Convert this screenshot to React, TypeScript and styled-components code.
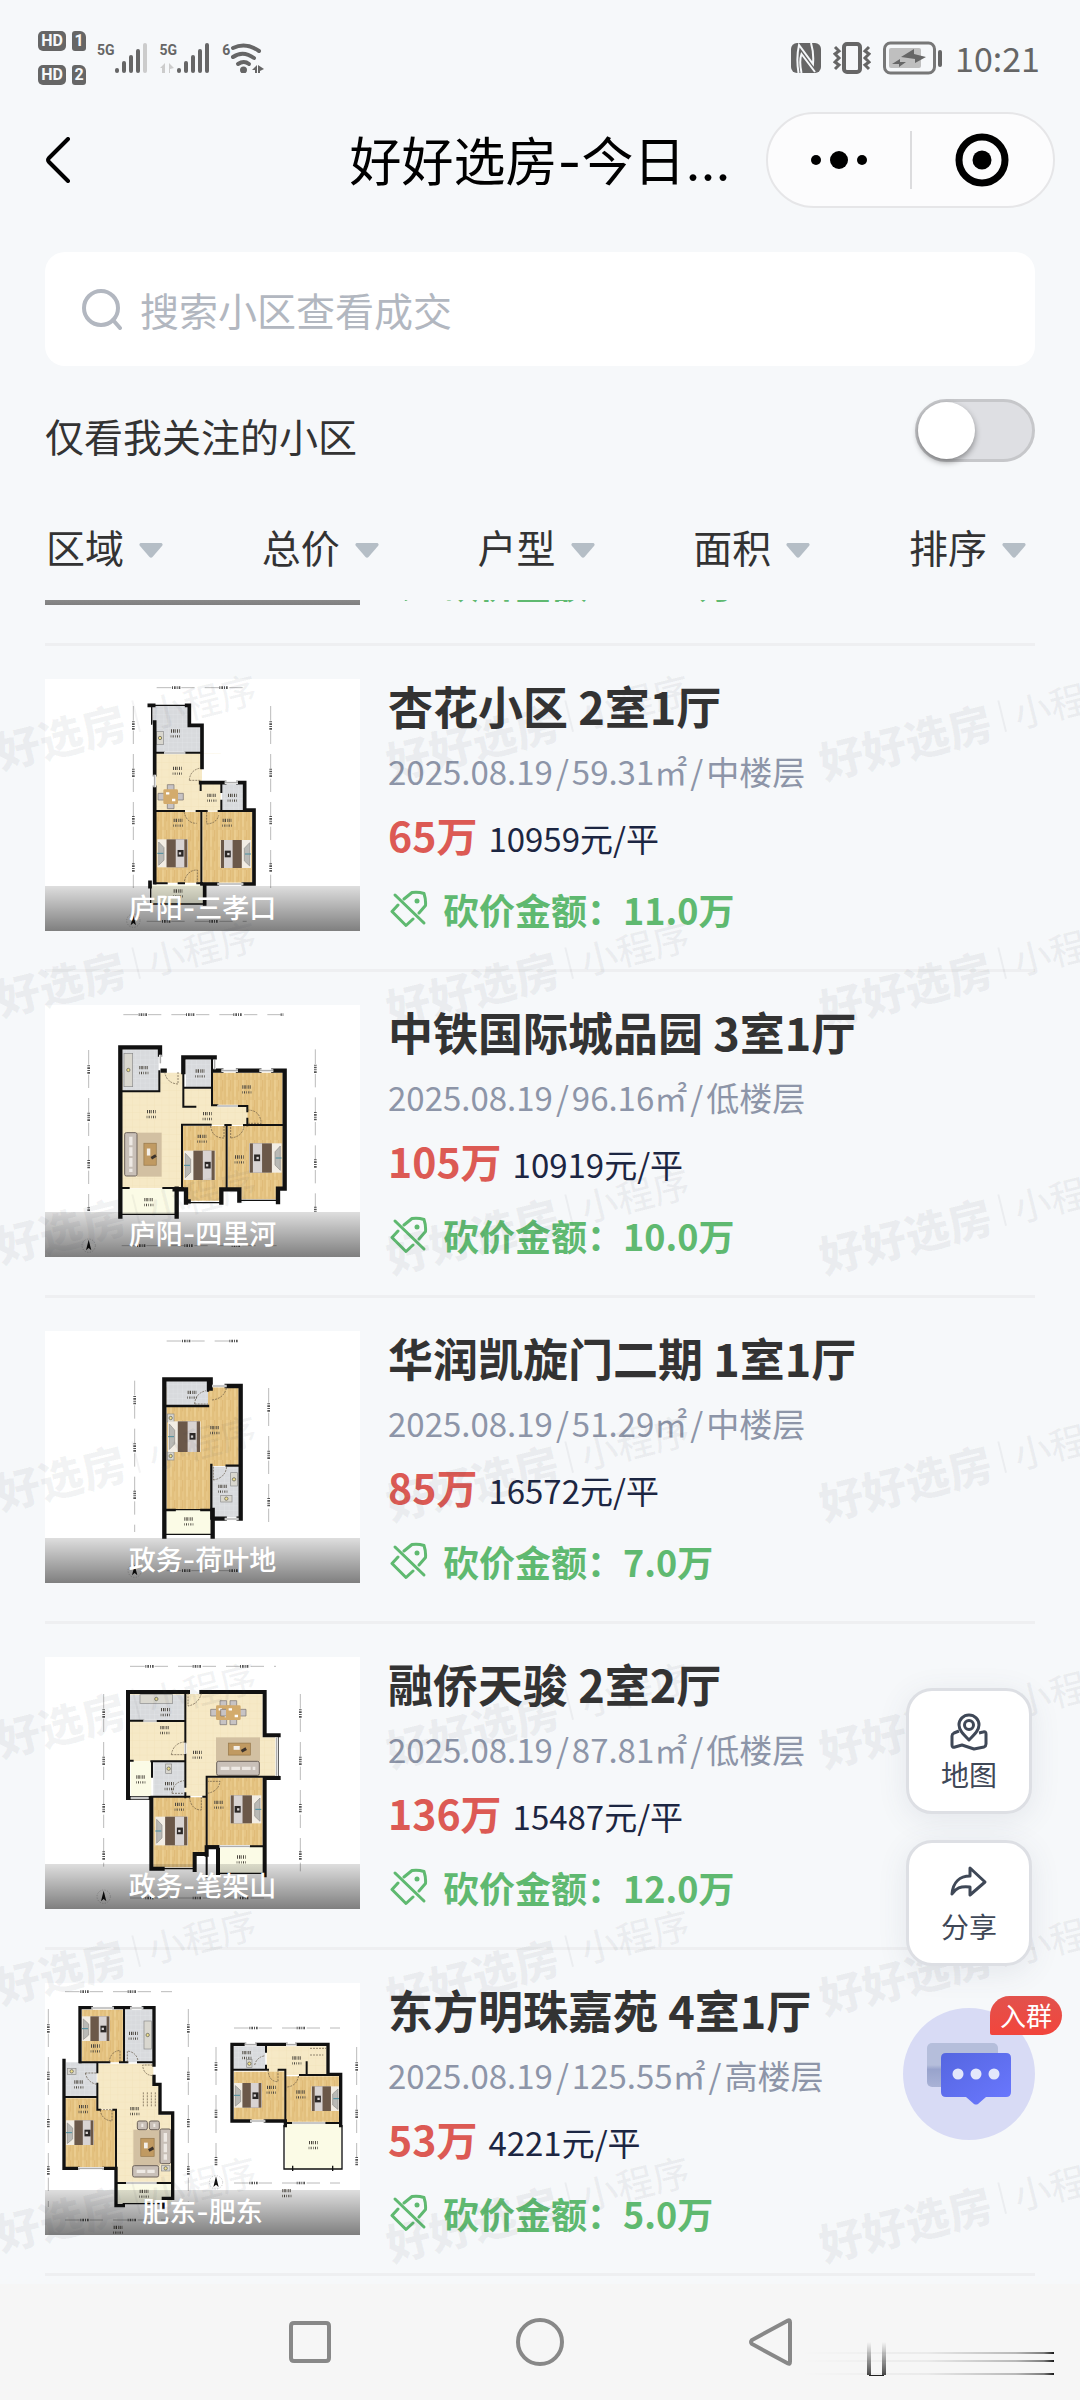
import React from 'react';
import styled, { createGlobalStyle } from 'styled-components';

const GlobalStyle = createGlobalStyle`
  *, *::before, *::after { box-sizing: border-box; }
  body {
    margin: 0;
    background: #f6f8fa;
    color: #333;
    font-family: "Noto Sans CJK SC", "Noto Sans", sans-serif;
  }
  button, input, select { font: inherit; color: inherit; }
  button { border: 0; padding: 0; background: none; cursor: pointer; }
`;

const Shell = styled.div`
  display: flex;
  flex-direction: column;
  min-height: 100vh;
`;

/* ---------- status bar ---------- */

const StatusBar = styled.div`
  display: flex;
  align-items: center;
  justify-content: space-between;
  height: 100px;
  padding: 16px 40px 0 38px;
  color: #666;
`;

const StatusGroup = styled.div<{ $gap: number }>`
  display: flex;
  align-items: center;
  gap: ${(p) => p.$gap}px;
`;

const HdStack = styled.div`
  display: grid;
  grid-template-columns: 28px 14px;
  gap: 14px 6px;
`;

const HdBadge = styled.span<{ $cut?: boolean }>`
  height: 20px;
  border-radius: ${(p) => (p.$cut ? '3px 6px 3px 3px' : '5px')};
  background: #666;
  color: #f6f8fa;
  font: 700 16px/20px Roboto, sans-serif;
  text-align: center;
`;

const Network = styled.div`
  display: flex;
  align-items: flex-start;
  height: 30px;
`;

const NetworkName = styled.span`
  font: 700 14px/14px Roboto, sans-serif;
`;

const Clock = styled.time`
  font-size: 34px;
  line-height: 34px;
`;

const Signal = ({ bars, arrows }: { bars: number; arrows?: boolean }) => (
  <svg width="34" height="30" viewBox="0 0 34 30" overflow="visible" aria-hidden="true">
    {[25, 18, 12, 6, 0].map((top, i) => (
      <rect key={top} x={i * 7} y={top} width="4" height={30 - top} rx="2" fill={i < bars ? '#666' : '#ccc'} />
    ))}
    {arrows && <path d="M-17 25l5-5v10h-3v-5zM-3 25l-5-5v10l1 0v-4z" fill="#ccc" />}
  </svg>
);

const Wifi = () => (
  <svg width="36" height="30" viewBox="0 0 36 30" aria-hidden="true">
    <g fill="none" stroke="#666" strokeWidth="4" strokeLinecap="round">
      <path d="M3 5q13-6 26 3" />
      <path d="M3 14q10-7 21 1" />
      <path d="M8 21q6-4 11 0" />
    </g>
    <circle cx="13.500" cy="27" r="3.500" fill="#666" />
    <path d="M22 27l5-5v9h-2v-4zM34 26l-6-4v9h2v-3z" fill="#666" />
  </svg>
);

const Nfc = () => (
  <svg width="30" height="30" viewBox="0 0 30 30" aria-hidden="true">
    <rect width="30" height="30" rx="6" fill="#666" />
    <path d="M7.500 30Q5 15 8 2l14 19Q23 10 20 0" fill="none" stroke="#f6f8fa" strokeWidth="2" />
    <path d="M10.500 30Q8 18 10.500 11L24 29" fill="none" stroke="#f6f8fa" strokeWidth="2" />
  </svg>
);

const Vibrate = () => (
  <svg width="38" height="32" viewBox="0 0 38 32" fill="none" stroke="#666" aria-hidden="true">
    <rect x="11" y="2" width="16" height="28" rx="3" strokeWidth="4" />
    <path d="M2 5l4 4-4 3 4 4-4 4 4 3-4 4M36 5l-4 4 4 3-4 4 4 4-4 3 4 4" strokeWidth="3" />
  </svg>
);

const Battery = () => (
  <svg width="60" height="34" viewBox="0 0 60 34" aria-hidden="true">
    <rect x="1.500" y="2" width="50" height="30" rx="6" fill="none" stroke="#777" strokeWidth="3" />
    <rect x="6" y="7" width="32" height="20" rx="2" fill="#bfbfbf" />
    <rect x="55" y="9" width="4" height="17" rx="2" fill="#666" />
    <path d="M18 16l13-8v5l12 3-11 6v-4zM9 23l8-5v3h6l-7 5v-3z" fill="#666" />
  </svg>
);

/* ---------- header ---------- */

const Header = styled.header`
  display: grid;
  grid-template-columns: 289px 1fr 289px;
  align-items: center;
  height: 120px;
  padding: 0 25px;
`;

const BackButton = styled.button`
  display: flex;
  justify-self: start;
  padding: 10px 20px;
`;

const Title = styled.h1`
  margin: 0;
  padding-top: 6px;
  font-family: Inter, "Noto Sans CJK SC", sans-serif;
  font-size: 52px;
  line-height: 72px;
  font-weight: 400;
  color: #000;
  text-align: center;
  white-space: nowrap;
`;

const Capsule = styled.div`
  display: flex;
  align-items: center;
  height: 96px;
  border: 2px solid #e6e6e8;
  border-radius: 48px;
  background: #fcfcfd;
`;

const CapsuleButton = styled.button`
  display: flex;
  flex: 1;
  align-items: center;
  justify-content: center;
  height: 58px;
  & + & { border-left: 2px solid #dcdcde; }
`;

/* ---------- search and filters ---------- */

const Controls = styled.section`
  display: flex;
  flex-direction: column;
  padding: 32px 45px 0;
`;

const SearchBox = styled.label`
  display: flex;
  align-items: center;
  gap: 18px;
  height: 114px;
  padding: 0 37px;
  border-radius: 20px;
  background: #fff;
`;

const SearchInput = styled.input`
  flex: 1;
  min-width: 0;
  padding: 0;
  border: 0;
  outline: 0;
  background: none;
  font-size: 39px;
  line-height: 56px;
  &::placeholder { color: #b2b7c0; opacity: 1; }
`;

const FollowRow = styled.div`
  display: flex;
  align-items: center;
  justify-content: space-between;
  height: 63px;
  margin-top: 33px;
`;

const FollowLabel = styled.label`
  padding-top: 10px;
  font-size: 39px;
  line-height: 55px;
`;

const Switch = styled.input`
  appearance: none;
  display: flex;
  width: 120px;
  height: 63px;
  margin: 0;
  border: 3px solid #c6c7ca;
  border-radius: 32px;
  background: #dedfe3;
  &::before {
    content: "";
    width: 57px;
    height: 57px;
    border-radius: 50%;
    background: #fff;
    box-shadow: 0 3px 6px rgba(0, 0, 0, 0.4);
  }
  &:checked { background: #5fb970; justify-content: flex-end; }
`;

const Filters = styled.div`
  display: flex;
  justify-content: space-between;
  padding: 56px 9px 26px 1px;
`;

const Filter = styled.label`
  display: flex;
  align-items: center;
  gap: 14px;
  color: #333;
`;

const FilterSelect = styled.select`
  appearance: none;
  padding: 0;
  border: 0;
  background: none;
  font-size: 39px;
  line-height: 56px;
  height: 56px;
`;

const FilterArrow = styled.svg`
  margin-top: 8px;
`;

/* ---------- list ---------- */

const ListArea = styled.main`
  position: relative;
  flex: 1;
`;

const List = styled.ul`
  margin: 0;
  padding: 0 45px;
  list-style: none;
`;

const Item = styled.li<{ $peek?: boolean }>`
  padding: ${(p) => (p.$peek ? '0 0 38px' : '33px 0 38px')};
  border-bottom: 3px solid #eeeff1;
`;

const ItemRow = styled.article<{ $peek?: boolean }>`
  display: flex;
  align-items: flex-end;
  gap: 28px;
  height: ${(p) => (p.$peek ? '5px' : 'auto')};
  overflow: ${(p) => (p.$peek ? 'hidden' : 'visible')};
`;

const Thumb = styled.figure<{ $peek?: boolean }>`
  position: relative;
  flex: none;
  width: 315px;
  height: ${(p) => (p.$peek ? '45px' : '252px')};
  margin: 0;
  background: #fff;
  & > svg { display: block; }
`;

const Caption = styled.figcaption`
  position: absolute;
  inset: auto 0 0;
  height: 45px;
  background: linear-gradient(rgba(0, 0, 0, 0.13), rgba(0, 0, 0, 0.5));
  color: #fff;
  font-family: Inter, "Noto Sans CJK SC", sans-serif;
  font-size: 27px;
  line-height: 45px;
  font-weight: 500;
  text-align: center;
`;

const Info = styled.div`
  display: flex;
  flex-direction: column;
  align-self: stretch;
  justify-content: flex-end;
  min-width: 0;
  white-space: nowrap;
`;

const Name = styled.h2`
  margin: 0 0 18px;
  font-size: 45px;
  line-height: 50px;
  font-weight: 700;
`;

const Meta = styled.p`
  display: flex;
  gap: 3px;
  margin: 0 0 18px;
  font-size: 33px;
  line-height: 44px;
  color: #8d95a8;
`;

const PriceLine = styled.p`
  display: flex;
  align-items: baseline;
  gap: 11px;
  margin: 0 0 28px;
  line-height: 46px;
`;

const Price = styled.strong`
  font-size: 41px;
  font-weight: 700;
  color: #dc5a54;
`;

const UnitPrice = styled.span`
  font-size: 33px;
  color: #1c2642;
`;

const Deal = styled.p`
  display: flex;
  align-items: center;
  gap: 15px;
  margin: 0;
  padding: 0 0 2px 2px;
  font-size: 36px;
  line-height: 40px;
  font-weight: 700;
  color: #5fb970;
`;

const TagIcon = () => (
  <svg width="38" height="38" viewBox="0 0 38 38" fill="none" stroke="#5fb970" strokeWidth="3" strokeLinecap="round" strokeLinejoin="round" aria-hidden="true">
    <path d="M5 5l29 28" />
    <path d="M14 9l8-6.500q6-1 12 1 2 6 1.500 12L29 23" />
    <path d="M8 15l-6 6.500L16 35.500l7-6.500" />
    <circle cx="27" cy="11" r="2.500" fill="#5fb970" stroke="none" />
  </svg>
);

/* ---------- floor plan drawings ---------- */

type Box = [number, number, number, number];
type Plan = {
  view: string;
  rooms: [string, string][];
  walls: [number, string][];
  windows?: string;
  doors?: string;
  dims: string;
  beds?: [number, number, number, number, boolean][];
  sofas?: Box[];
  rugs?: Box[];
  tables?: [number, number][];
  stoves?: Box[];
  notes: [number, number][];
  north?: [number, number];
};

const wood = 'url(#wood)';
const tile = 'url(#tile)';
const stone = 'url(#stone)';
const deck = '#fbfbe6';

const plans: Record<string, Plan> = {
  xinghua: {
    view: '135 147 945 756',
    rooms: [
      [tile, 'M456 228H565V290H604V368H466V280H456z'],
      [stone, 'M468 370H662V542H468z'],
      ['#fff', 'M606 370H665V454H606z'],
      [tile, 'M666 462H732V542H666z'],
      [wood, 'M468 545H602V758H468zM607 545H757V758H607z'],
      [deck, 'M455 764H612V822H455z'],
    ],
    walls: [
      [11, 'M448 226H461M560 226H568V286H606V412M464 276V434M464 472V758M602 458H674M714 458H734V540H762V762H730M606 762H652M450 757V770M614 764V822'],
      [6, 'M466 368H492M556 368H606M468 543H552M590 543H620M656 543H760M604 543V762M664 460V486M664 512V542M602 460V480M466 760H500M536 760H552M592 760H606'],
      [4, 'M455 226V282M461 226H560M452 764V822H616'],
    ],
    windows: 'M464 434V472M674 458H714M652 762H730M492 369H556',
    doors: 'M568 451H602M568 451Q570 420 602 414M552 545Q560 580 590 580M620 545V582Q650 580 656 556M592 760V720Q560 720 552 758',
    dims: 'M400 228V820M812 228V820M470 173H750M440 874H740',
    beds: [[472, 628, 92, 84, false], [661, 630, 92, 84, true]],
    tables: [[512, 500]],
    stoves: [[470, 304, 20, 40]],
    notes: [[526, 310], [532, 422], [635, 503], [697, 503], [534, 578], [681, 578], [534, 790]],
    north: [400, 872],
  },
  pinyuan: {
    view: '135 75 945 756',
    rooms: [
      [stone, 'M366 278H550V625H366zM550 325H742V435H550z'],
      [tile, 'M368 208H476V334H368zM558 240H634V324H558z'],
      [wood, 'M638 278H848V435H742V378H638zM548 438H678V624H660V662H564V624H548zM684 438H848V624H830V658H724V624H684z'],
      [deck, 'M368 626H524V702H368z'],
    ],
    walls: [
      [13, 'M480 224V202H361V710M530 626V710M550 276V232H644M644 272H664M714 272H778M820 272H854V626H834M488 272H494M524 628H558V668M560 664H566M680 628H664V668M680 628H718V662M834 626V666'],
      [6, 'M366 334H478V274M550 272V380H586M554 323H636V376H652M636 240V376M714 378H742V394M742 416V436M546 622V434H632M676 435H692M732 435H850M680 435V628M368 624H386M490 624H548'],
      [4, 'M366 703H526M562 668H664M718 661H836'],
    ],
    windows: 'M664 272H714M778 272H820M481 224V250M644 240V268M652 378H714',
    doors: 'M534 276V312Q500 310 494 276M632 438Q636 474 672 474V438M692 474Q728 470 732 438M692 474V438M742 390Q780 390 784 430H742',
    dims: 'M266 210V696M946 208V696M370 104H850M365 797H830',
    beds: [[552, 512, 94, 88, false], [747, 490, 98, 88, true]],
    sofas: [[374, 458, 37, 130]],
    rugs: [[411, 458, 74, 132]],
    stoves: [[372, 220, 26, 100]],
    notes: [[431, 270], [454, 402], [600, 280], [740, 328], [622, 408], [606, 476], [718, 538], [446, 666]],
    north: [266, 797],
  },
  kaixuan: {
    view: '135 93 945 756',
    rooms: [
      [wood, 'M500 262H716V498H632V628H500z'],
      [tile, 'M500 244H624V320H500zM638 500H716V652H638z'],
      [deck, 'M500 630H632V704H500z'],
    ],
    walls: [
      [13, 'M493 710V238H632V266M680 258H722V656H716M674 656H638V710M638 630V710'],
      [7, 'M498 318H624M624 240V272M634 495V656M680 497H720M498 630H524M604 630H636'],
      [4, 'M498 703H634M524 629H604'],
    ],
    windows: 'M636 258H680M674 657H716',
    doors: 'M584 312H624M584 312Q586 280 618 272M636 300Q672 296 680 262M640 540Q676 534 680 500M640 500V540',
    dims: 'M404 242V696M806 264V690M500 123H716M500 812H716',
    beds: [[504, 364, 98, 92, false]],
    stoves: [[692, 518, 20, 40], [662, 586, 34, 20], [502, 342, 20, 24], [502, 456, 20, 24]],
    notes: [[576, 284], [644, 390], [668, 566], [566, 664]],
    north: [404, 812],
  },
  tianjun: {
    view: '135 81 945 756',
    rooms: [
      [stone, 'M390 192H788V322H834V438H788V444H620V498H554V394H390z'],
      [tile, 'M390 194H554V272H390zM460 396H554V498H460z'],
      [wood, 'M460 502H618V672H582V712H460zM622 444H788V648H622z'],
      [deck, 'M392 394H454V500H392zM658 648H794V730H658z'],
    ],
    walls: [
      [12, 'M564 186H384V504M604 186H794V316H836M836 444H794V736M384 504H454V716H488M620 672H584V720M620 674V652H654V734'],
      [6, 'M556 190V338M390 272H430M470 273H556M556 372V394M454 394H556V470M456 394V440M556 490V502M454 500H568M610 500H620V440H836M620 440V740M390 392H398M622 649H658M750 649H794M656 700V734'],
      [4, 'M834 316V444M488 716H582M656 730H794V700M390 502H454'],
    ],
    windows: 'M830 322V438M392 504H446M556 338V372M430 273H470M658 649H750',
    doors: 'M564 190V228Q596 222 604 190M514 374Q520 340 552 336M514 374H552M516 490Q520 456 552 452M516 490H552M622 490Q656 484 660 454H622M568 502Q574 540 604 540V502',
    dims: 'M311 192V710M901 192V724M390 109H828M390 804H820',
    beds: [[466, 560, 98, 86, false], [690, 496, 94, 84, true]],
    sofas: [[650, 394, 128, 42]],
    rugs: [[648, 322, 132, 72]],
    tables: [[670, 248], [700, 248]],
    stoves: [[420, 194, 98, 26], [497, 402, 18, 28]],
    notes: [[496, 246], [494, 300], [592, 374], [422, 448], [508, 468], [538, 530], [656, 524], [724, 688]],
    north: [311, 800],
  },
  mingzhu: {
    view: '135 128 945 756',
    rooms: [
      [stone, 'M292 370H460V434H478V524H516V726H350V506H292zM800 318H980V404H800z'],
      [wood, 'M246 208H370V366H246zM196 474H290V508H346V680H196zM702 394H854V538H702zM858 408H1018V548H858z'],
      [tile, 'M374 208H458V366H374zM198 366H290V468H198zM702 318H796V388H702z'],
      [deck, 'M350 730H516V790H350zM856 550H1024V686H856z'],
    ],
    walls: [
      [10, 'M274 202H240V364M342 202H390M430 202H462V374M462 408V432H480V518H518V774H490V800M234 684H192V360M312 684H348V796H370M734 312H696V542H750M770 312H858M890 312H984V402H1022V556M796 542H856V556'],
      [6, 'M372 204V366M240 366H328M360 366H382M414 366H462M292 366V396M292 430V508H300M192 470H292M340 508H348V684M350 728H378M470 728H516M798 316V334M798 376V388M700 388H804M836 388H856V546M900 404H980M920 366V404M858 548H876M976 548H1022'],
      [4, 'M348 730V796M370 790H490M852 556V686H1026V556M878 678V690M998 678V690'],
    ],
    windows: 'M274 203H342M390 203H430M234 684H312M734 313H770M858 313H890M750 542H796M378 728H470M876 548H976',
    doors: 'M328 366Q330 334 360 330V366M382 366V332Q410 336 414 362M458 374H428Q430 404 458 406M256 398H290M256 398Q262 426 290 432M300 508H336V542Q306 540 300 508M804 388Q806 424 834 424V388M862 440Q892 436 896 404M764 374Q770 350 796 346M430 456V498M442 456V498M454 456V498M466 456V498M930 324H978M930 344H970',
    dims: 'M145 206V800M565 206V784M195 154H516M195 839H510M648 320V682M1070 320V682M702 263H1020M702 728H1020',
    beds: [[246, 228, 84, 74, false], [198, 540, 84, 74, false], [702, 428, 84, 74, false], [934, 438, 84, 74, true]],
    sofas: [[480, 566, 32, 104], [398, 676, 78, 34], [412, 542, 30, 26], [448, 542, 30, 26]],
    rugs: [[400, 568, 80, 108]],
    stoves: [[432, 242, 22, 84], [202, 384, 26, 18], [740, 358, 16, 24], [484, 676, 26, 16]],
    notes: [[286, 324], [400, 286], [236, 432], [250, 506], [404, 512], [432, 760], [740, 344], [814, 448], [890, 360], [902, 462], [940, 614], [354, 868], [860, 758]],
    north: [648, 726],
  },
};

const Textures = () => (
  <svg width="0" height="0" style={{ position: 'absolute' }} aria-hidden="true">
    <defs>
      <pattern id="wood" width="24" height="60" patternUnits="userSpaceOnUse">
        <rect width="24" height="60" fill="#e6c585" />
        <path d="M3 0V60M15 20V60M20 0V34" stroke="#dbb36c" strokeWidth="2" />
        <path d="M9 0V50" stroke="#efd39a" strokeWidth="3" />
      </pattern>
      <pattern id="tile" width="14" height="14" patternUnits="userSpaceOnUse">
        <rect width="14" height="14" fill="#d8dadd" />
        <path d="M0 0H14M0 0V14" stroke="#e4e6e8" strokeWidth="2" />
      </pattern>
      <pattern id="stone" width="22" height="22" patternUnits="userSpaceOnUse">
        <rect width="22" height="22" fill="#f6e9c6" />
        <path d="M0 0H22M0 0V22" stroke="#f1e1b8" strokeWidth="2" />
      </pattern>
    </defs>
  </svg>
);

const FloorPlan = ({ plan }: { plan: Plan }) => (
  <svg width="315" height="252" viewBox={plan.view} fill="none" aria-hidden="true">
    <path d={plan.dims} stroke="#999" strokeWidth="2" strokeDasharray="44 30 40 30" />
    <path d={plan.dims} stroke="#555" strokeWidth="8" strokeDasharray="0 46 3 3 5 3 3 3 5 71" />
    {plan.rooms.map(([fill, d]) => <path key={d} d={d} fill={fill} />)}
    {(plan.rugs ?? []).map(([x, y, w, h]) => (
      <g key={`${x}-${y}`}>
        <rect x={x} y={y} width={w} height={h} fill="#d2c0a2" />
        <rect x={x + w * 0.28} y={y + h * 0.24} width={w * 0.5} height={h * 0.5} fill="#c09a62" stroke="#94764a" strokeWidth="2" />
        <rect x={x + w * 0.4} y={y + h * 0.36} width={w * 0.14} height={h * 0.16} fill="#f3efe8" />
        <path d={`M${x + w * 0.58} ${y + h * 0.58}l14-8`} stroke="#3c332c" strokeWidth="9" />
      </g>
    ))}
    {(plan.sofas ?? []).map(([x, y, w, h]) => (
      <g key={`${x}-${y}`}>
        <rect x={x} y={y} width={w} height={h} rx="5" fill="#c9c0b8" stroke="#6d625b" strokeWidth="3" />
        <path d={w > h ? `M${x + 12} ${y + h / 2}H${x + w - 12}` : `M${x + w / 2} ${y + 12}V${y + h - 12}`} stroke="#eee9e4" strokeWidth="10" strokeDasharray="26 6" />
      </g>
    ))}
    {(plan.tables ?? []).map(([x, y]) => (
      <g key={`${x}-${y}`}>
        <path d={`M${x - 10} ${y - 36}h20v72h-20zM${x - 38} ${y - 10}h76v20h-76z`} fill="#c7c3c4" stroke="#77706e" strokeWidth="2" />
        <rect x={x - 22} y={y - 22} width="44" height="44" rx="4" fill="#d3ab6c" />
        <path d={`M${x - 14} ${y - 10}h10M${x + 4} ${y + 10}h10`} stroke="#fff" strokeWidth="7" />
      </g>
    ))}
    {(plan.stoves ?? []).map(([x, y, w, h]) => (
      <g key={`${x}-${y}`}>
        <rect x={x} y={y} width={w} height={h} fill="#d9d7cf" stroke="#8a8a8a" strokeWidth="2" />
        <circle cx={x + w * 0.5} cy={y + h * 0.5} r="5" fill="#efe08a" stroke="#555" strokeWidth="2" />
      </g>
    ))}
    {(plan.beds ?? []).map(([x, y, w, h, flip]) => (
      <g key={`${x}-${y}`} transform={flip ? `translate(${2 * x + w} 0) scale(-1 1)` : undefined}>
        <rect x={x} y={y} width={w} height={h} fill="#f2ede4" />
        <path d={`M${x + 4} ${y + 8}l16 ${h * 0.2}v${h * 0.45}l-16 ${h * 0.18}z`} fill="#b9b9b5" stroke="#8f8d88" strokeWidth="2" />
        <path d={`M${x} ${y + h / 2}h18`} stroke="#4b8fa0" strokeWidth="3" />
        <rect x={x + w * 0.3} y={y} width={w * 0.68} height={h} fill="#6b5849" />
        <rect x={x + w * 0.6} y={y} width={w * 0.28} height={h} fill="#d8d3d2" />
        <rect x={x + w * 0.66} y={y + h * 0.38} width="18" height="20" fill="#2b2726" />
        <rect x={x + w * 0.7} y={y + h * 0.46} width="7" height="7" fill="#d8d3d2" />
      </g>
    ))}
    {plan.walls.map(([w, d]) => <path key={d} d={d} stroke="#111" strokeWidth={w} strokeLinecap="square" />)}
    <path d={plan.windows} stroke="#f1f1f1" strokeWidth="8" />
    <path d={plan.windows} stroke="#777" strokeWidth="2" />
    <path d={plan.doors} stroke="#5f5140" strokeWidth="2" strokeDasharray="6 3" />
    {plan.notes.map(([x, y]) => (
      <g key={`${x}-${y}`} stroke="#4d4840">
        <path d={`M${x - 13} ${y - 7}h26`} strokeWidth="10" strokeDasharray="3 3 4 3 2 3" />
        <path d={`M${x - 14} ${y + 9}h28`} strokeWidth="7" strokeDasharray="2 4 3 4" />
      </g>
    ))}
    {plan.north && (
      <g>
        <circle cx={plan.north[0]} cy={plan.north[1]} r="20" stroke="#777" strokeWidth="1" strokeDasharray="4 4" />
        <path d={`M${plan.north[0]} ${plan.north[1] - 18}l8 32-8-7-8 7z`} fill="#111" />
      </g>
    )}
  </svg>
);

/* ---------- watermark ---------- */

const WatermarkLayer = styled.div`
  position: absolute;
  inset: 0;
  overflow: hidden;
  pointer-events: none;
`;

const WatermarkGrid = styled.div`
  display: grid;
  grid-template-columns: repeat(3, 433px);
  grid-auto-rows: 247px;
  margin-left: -112px;
`;

const WatermarkTile = styled.div`
  display: flex;
  align-items: center;
  justify-content: center;
  gap: 11px;
  transform: rotate(-14deg);
  color: rgba(60, 65, 80, 0.06);
  font-size: 37px;
  font-weight: 500;
  line-height: 44px;
  white-space: nowrap;
`;

const WatermarkBrand = styled.b`
  font-size: 44px;
  font-weight: 900;
`;

const WatermarkRule = styled.i`
  width: 2px;
  height: 32px;
  background: rgba(60, 65, 80, 0.06);
`;

/* ---------- floating actions ---------- */

const Floating = styled.aside`
  position: absolute;
  right: 45px;
  bottom: 144px;
  display: flex;
  flex-direction: column;
  align-items: center;
  gap: 26px;
`;

const ActionButton = styled.button`
  display: flex;
  flex-direction: column;
  align-items: center;
  justify-content: center;
  gap: 7px;
  width: 126px;
  height: 126px;
  border: 3px solid #dddfe4;
  border-radius: 26px;
  background: #fff;
  box-shadow: 0 6px 30px rgba(70, 80, 110, 0.1);
  color: #3f4857;
  font-size: 28px;
  line-height: 32px;
`;

const ChatButton = styled.button`
  position: relative;
  display: flex;
  align-items: center;
  justify-content: center;
  width: 132px;
  height: 132px;
  margin-top: 16px;
  border-radius: 50%;
  background: #d8dbf5;
`;

const ChatBadge = styled.span`
  position: absolute;
  top: -12px;
  right: -27px;
  width: 72px;
  height: 39px;
  border-radius: 20px 20px 20px 2px;
  background: linear-gradient(#e2524c, #f2453c);
  color: #fff;
  font-size: 26px;
  line-height: 37px;
`;

/* ---------- system navigation ---------- */

const SystemNav = styled.nav`
  position: relative;
  display: flex;
  align-items: center;
  justify-content: center;
  gap: 182px;
  height: 116px;
  background: #f6f6f6;
`;

const NavButton = styled.button`
  display: flex;
`;

const Smudge = styled.svg`
  position: absolute;
  right: 24px;
  bottom: 20px;
`;

/* ---------- data ---------- */

const listings = [
  { plan: 'xinghua', place: '庐阳-三孝口', name: '杏花小区 2室1厅', date: '2025.08.19', area: '59.31㎡', floor: '中楼层', price: '65万', unit: '10959元/平', cut: '11.0万' },
  { plan: 'pinyuan', place: '庐阳-四里河', name: '中铁国际城品园 3室1厅', date: '2025.08.19', area: '96.16㎡', floor: '低楼层', price: '105万', unit: '10919元/平', cut: '10.0万' },
  { plan: 'kaixuan', place: '政务-荷叶地', name: '华润凯旋门二期 1室1厅', date: '2025.08.19', area: '51.29㎡', floor: '中楼层', price: '85万', unit: '16572元/平', cut: '7.0万' },
  { plan: 'tianjun', place: '政务-笔架山', name: '融侨天骏 2室2厅', date: '2025.08.19', area: '87.81㎡', floor: '低楼层', price: '136万', unit: '15487元/平', cut: '12.0万' },
  { plan: 'mingzhu', place: '肥东-肥东', name: '东方明珠嘉苑 4室1厅', date: '2025.08.19', area: '125.55㎡', floor: '高楼层', price: '53万', unit: '4221元/平', cut: '5.0万' },
];

const filters = ['区域', '总价', '户型', '面积', '排序'];

const DealLine = ({ amount }: { amount: string }) => (
  <Deal>
    <TagIcon />
    <span>砍价金额：{amount}</span>
  </Deal>
);

export default function App() {
  return (
    <Shell>
      <GlobalStyle />
      <Textures />

      <StatusBar>
        <StatusGroup $gap={11}>
          <HdStack>
            <HdBadge>HD</HdBadge>
            <HdBadge $cut>1</HdBadge>
            <HdBadge>HD</HdBadge>
            <HdBadge $cut>2</HdBadge>
          </HdStack>
          <Network><NetworkName>5G</NetworkName><Signal bars={4} /></Network>
          <Network><NetworkName>5G</NetworkName><Signal bars={5} arrows /></Network>
          <Network><NetworkName>6</NetworkName><Wifi /></Network>
        </StatusGroup>
        <StatusGroup $gap={12}>
          <Nfc />
          <Vibrate />
          <Battery />
          <Clock>10:21</Clock>
        </StatusGroup>
      </StatusBar>

      <Header>
        <BackButton aria-label="返回">
          <svg width="26" height="46" viewBox="0 0 26 46" fill="none" stroke="#000" strokeWidth="4" strokeLinecap="round" strokeLinejoin="round">
            <path d="M23 2L4 21q-2 2 0 4l19 19" />
          </svg>
        </BackButton>
        <Title>好好选房-今日...</Title>
        <Capsule>
          <CapsuleButton aria-label="更多">
            <svg width="58" height="20" viewBox="0 0 58 20">
              <circle cx="6" cy="10" r="5" />
              <circle cx="29" cy="10" r="9" />
              <circle cx="52" cy="10" r="5" />
            </svg>
          </CapsuleButton>
          <CapsuleButton aria-label="关闭">
            <svg width="54" height="54" viewBox="0 0 54 54">
              <circle cx="27" cy="27" r="23" fill="none" stroke="#000" strokeWidth="7" />
              <circle cx="27" cy="27" r="9.500" />
            </svg>
          </CapsuleButton>
        </Capsule>
      </Header>

      <Controls>
        <SearchBox>
          <svg width="40" height="42" viewBox="0 0 40 42" fill="none" stroke="#b2b7c0" strokeWidth="4" strokeLinecap="round" aria-hidden="true">
            <circle cx="19" cy="20" r="17" />
            <path d="M31 32l7 8" />
          </svg>
          <SearchInput type="search" placeholder="搜索小区查看成交" aria-label="搜索小区查看成交" />
        </SearchBox>
        <FollowRow>
          <FollowLabel htmlFor="followed">仅看我关注的小区</FollowLabel>
          <Switch id="followed" type="checkbox" role="switch" />
        </FollowRow>
        <Filters>
          {filters.map((name) => (
            <Filter key={name}>
              <FilterSelect aria-label={name}>
                <option>{name}</option>
              </FilterSelect>
              <FilterArrow width="24" height="15" viewBox="0 0 24 15" aria-hidden="true">
                <path d="M1.500 0h21q2 1 .5 3L13.500 14q-1.500 1.500-3 0L1 3Q-.5 1 1.500 0z" fill="#b5bec6" />
              </FilterArrow>
            </Filter>
          ))}
        </Filters>
      </Controls>

      <ListArea>
        <List>
          <Item $peek>
            <ItemRow $peek>
              <Thumb $peek><Caption /></Thumb>
              <Info><DealLine amount="10.0万" /></Info>
            </ItemRow>
          </Item>
          {listings.map((item) => (
            <Item key={item.name}>
              <ItemRow>
                <Thumb>
                  <FloorPlan plan={plans[item.plan]} />
                  <Caption>{item.place}</Caption>
                </Thumb>
                <Info>
                  <Name>{item.name}</Name>
                  <Meta>
                    <span>{item.date}</span>
                    <span>/</span>
                    <span>{item.area}</span>
                    <span>/</span>
                    <span>{item.floor}</span>
                  </Meta>
                  <PriceLine>
                    <Price>{item.price}</Price>
                    <UnitPrice>{item.unit}</UnitPrice>
                  </PriceLine>
                  <DealLine amount={item.cut} />
                </Info>
              </ItemRow>
            </Item>
          ))}
        </List>

        <WatermarkLayer aria-hidden="true">
          <WatermarkGrid>
            {Array.from({ length: 21 }, (_, i) => (
              <WatermarkTile key={i}>
                <WatermarkBrand>好好选房</WatermarkBrand>
                <WatermarkRule />
                <span>小程序</span>
              </WatermarkTile>
            ))}
          </WatermarkGrid>
        </WatermarkLayer>

        <Floating>
          <ActionButton>
            <svg width="38" height="38" viewBox="0 0 38 38" fill="none" stroke="#3f4857" strokeWidth="3" strokeLinejoin="round" aria-hidden="true">
              <path d="M19 27C13 21 9 17 9 12a10 10 0 0 1 20 0c0 5-4 9-10 15z" />
              <circle cx="19" cy="12" r="4.500" />
              <path d="M9 18l-5 2q-2 1-2 3v9q0 3 3 2l7-2 12 4 10-2q2-1 2-3V21q0-3-3-2l-4 1" />
            </svg>
            地图
          </ActionButton>
          <ActionButton>
            <svg width="38" height="38" viewBox="0 0 38 38" fill="none" stroke="#3f4857" strokeWidth="3" strokeLinejoin="round" aria-hidden="true">
              <path d="M20 3l15 14-15 13v-8C10 21 6 23 2 29 3 17 10 11 20 11z" />
            </svg>
            分享
          </ActionButton>
          <ChatButton>
            <svg width="86" height="64" viewBox="0 0 86 64" aria-hidden="true">
              <defs>
                <linearGradient id="bubble" x1="0" y1="0" x2="1" y2="1">
                  <stop offset="0" stopColor="#5566e0" />
                  <stop offset="1" stopColor="#6a78ff" />
                </linearGradient>
                <linearGradient id="bubbleBack" x1="0" y1="0" x2="0" y2="1">
                  <stop offset="0.500" stopColor="#b5bedb" />
                  <stop offset="0.600" stopColor="#98a3cc" />
                  <stop offset="1" stopColor="#a9b2d6" />
                </linearGradient>
              </defs>
              <rect x="1" y="1" width="71" height="44" rx="5" fill="url(#bubbleBack)" />
              <path d="M20 11h60q5 0 5 5v34q0 5-5 5H60l-8 7q-2 1-4 0l-8-7H20q-5 0-5-5V16q0-5 5-5z" fill="url(#bubble)" />
              <circle cx="32" cy="32" r="5.500" fill="#e3e7fb" />
              <circle cx="50" cy="32" r="5.500" fill="#e3e7fb" />
              <circle cx="68" cy="32" r="5.500" fill="#e3e7fb" />
            </svg>
            <ChatBadge>入群</ChatBadge>
          </ChatButton>
        </Floating>
      </ListArea>

      <SystemNav>
        {[
          'M8 5h32q3 0 3 3v32q0 3-3 3H8q-3 0-3-3V8q0-3 3-3z',
          'M24 2a22 22 0 1 1 0 44a22 22 0 1 1 0-44z',
          'M42 2.500q2-1 2 2v39q0 3-2 2L6 26q-2-2 0-4z',
        ].map((d, i) => (
          <NavButton key={d} aria-label={['最近任务', '主屏幕', '返回'][i]}>
            <svg width="48" height="48" viewBox="0 0 48 48" fill="none" stroke="#888" strokeWidth="4">
              <path d={d} />
            </svg>
          </NavButton>
        ))}
        <Smudge width="256" height="40" viewBox="0 0 256 40" aria-hidden="true">
          <defs>
            <linearGradient id="fadeDown" x1="0" y1="0" x2="0" y2="1">
              <stop offset="0" stopColor="#000" stopOpacity="0" />
              <stop offset="1" stopColor="#000" stopOpacity="0.700" />
            </linearGradient>
            <linearGradient id="fadeRight" x1="0" y1="0" x2="1" y2="0">
              <stop offset="0" stopColor="#000" stopOpacity="0" />
              <stop offset="0.500" stopColor="#000" stopOpacity="0.050" />
              <stop offset="0.850" stopColor="#000" stopOpacity="0.250" />
              <stop offset="0.960" stopColor="#000" stopOpacity="0.500" />
              <stop offset="1" stopColor="#000" stopOpacity="0.900" />
            </linearGradient>
          </defs>
          <rect x="67" y="2" width="4" height="33" fill="url(#fadeDown)" />
          <rect x="82" y="2" width="4" height="33" fill="url(#fadeDown)" />
          <rect x="69" y="35" width="15" height="1" fill="#222" />
          <rect x="0" y="12" width="254" height="2" fill="url(#fadeRight)" />
          <rect x="0" y="20" width="254" height="2" fill="url(#fadeRight)" />
          <rect x="0" y="33" width="254" height="2" fill="url(#fadeRight)" />
        </Smudge>
      </SystemNav>
    </Shell>
  );
}
